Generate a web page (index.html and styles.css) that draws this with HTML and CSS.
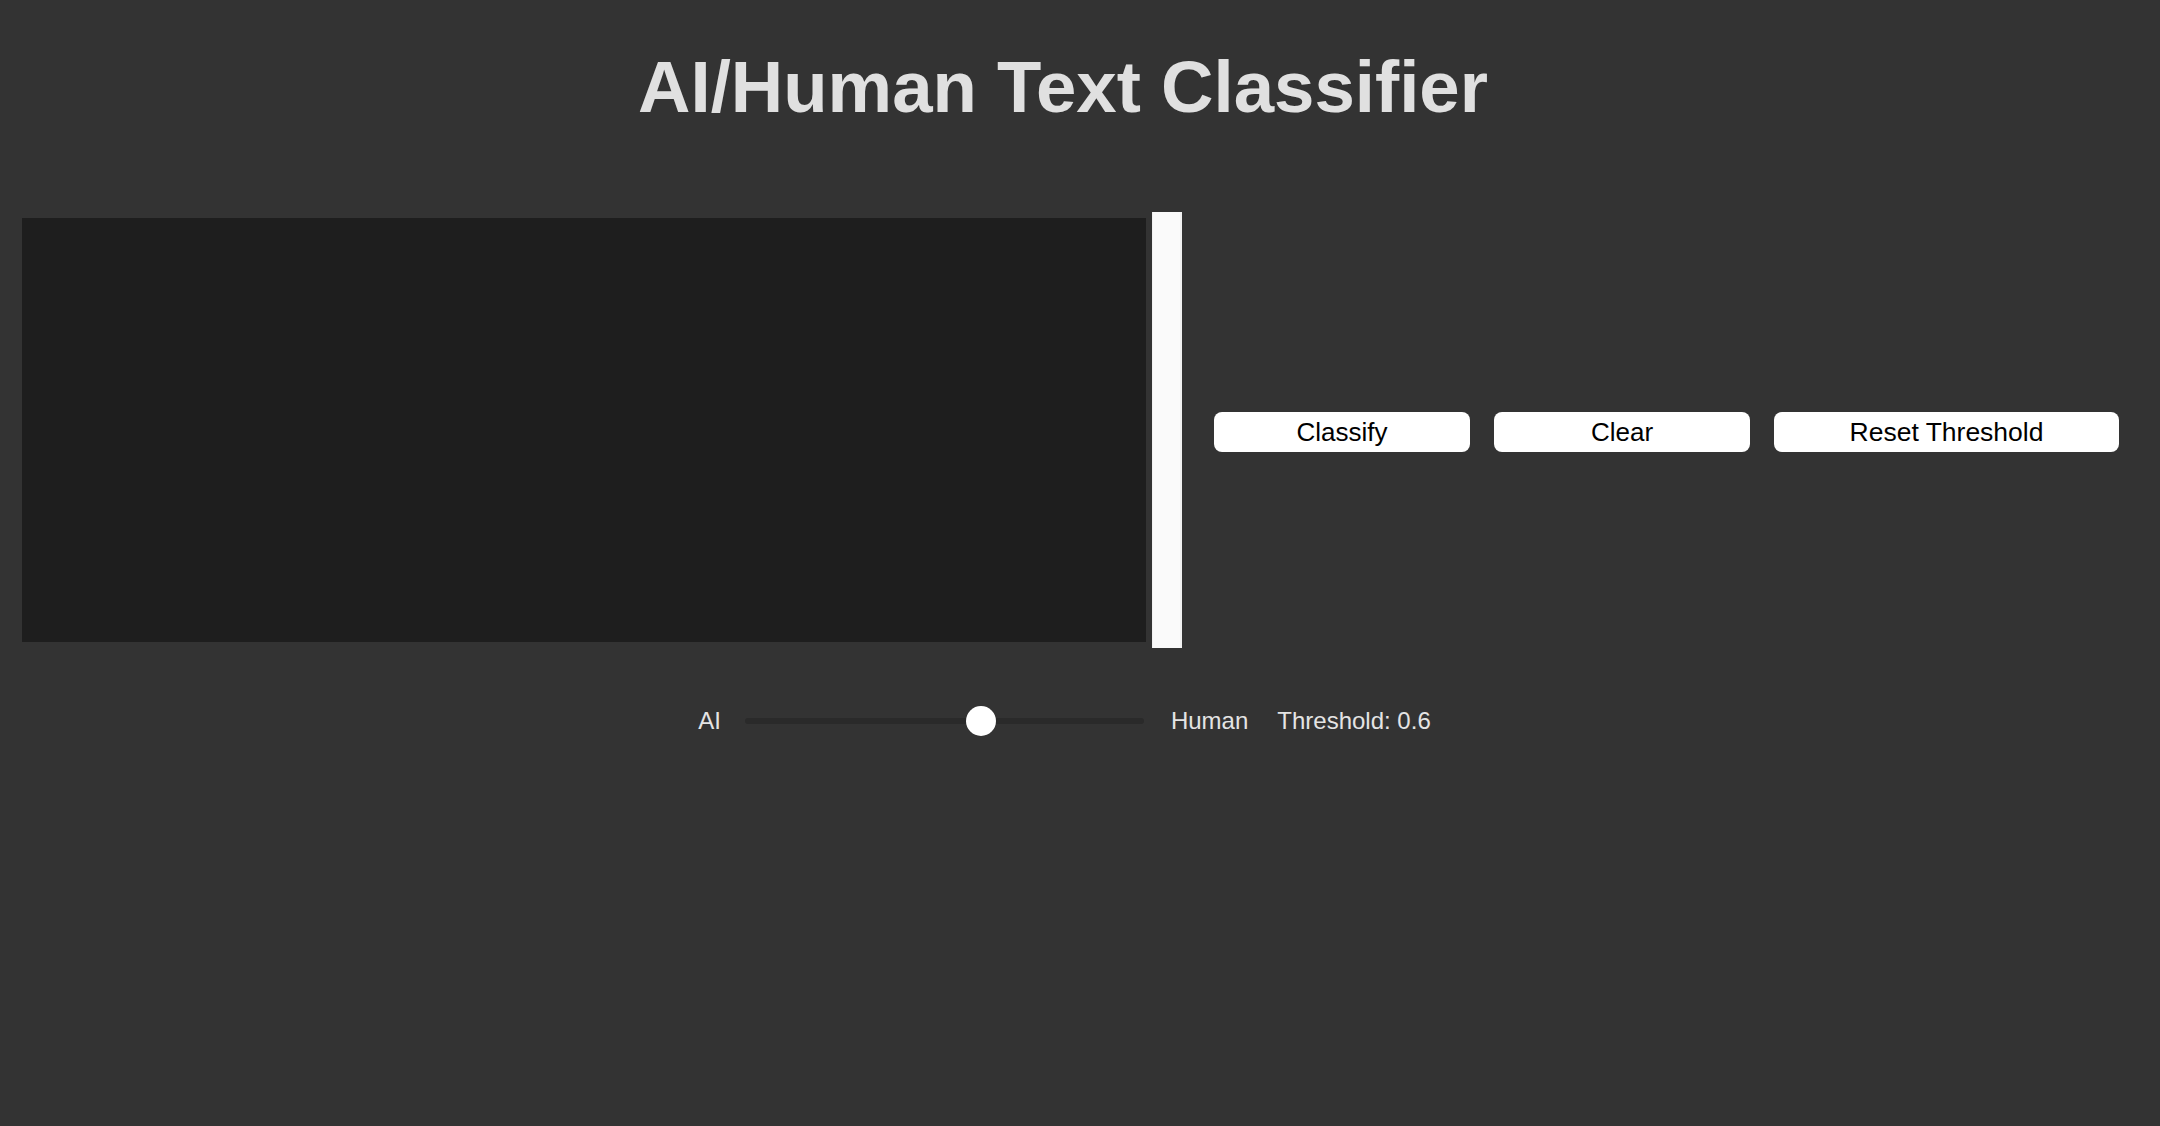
FILE: index.html
```html
<!DOCTYPE html>
<html lang="en">
<head>
<meta charset="utf-8">
<title>AI/Human Text Classifier</title>
<link rel="stylesheet" href="styles.css">
</head>
<body>
<div class="app">
  <h1 class="title">AI/Human Text Classifier</h1>
  <div class="main">
    <textarea class="editor"></textarea>
    <div class="side-bar"></div>
    <div class="buttons">
      <button class="btn btn-classify">Classify</button>
      <button class="btn btn-clear">Clear</button>
      <button class="btn btn-reset">Reset Threshold</button>
    </div>
  </div>
  <div class="slider-row">
    <span class="label label-ai">AI</span>
    <div class="slider">
      <div class="track"></div>
      <div class="thumb" style="left: 221px;"></div>
    </div>
    <span class="label label-human">Human</span>
    <span class="label label-threshold">Threshold: 0.6</span>
  </div>
</div>
</body>
</html>
```

FILE: styles.css
```css
html, body {
  margin: 0;
  padding: 0;
  background: #333333;
}

body {
  font-family: "Liberation Sans", Arial, sans-serif;
  color: #e0e0e0;
  height: 1126px;
  overflow: hidden;
}

.app {
  width: 2126px;
}

.title {
  margin: 51px 0 0;
  font-size: 72.6px;
  line-height: 72px;
  font-weight: bold;
  text-align: center;
  color: #e0e0e0;
}

.main {
  display: flex;
  align-items: center;
  margin-top: 89px;
  padding-left: 22px;
}

.editor {
  box-sizing: border-box;
  width: 1124px;
  height: 424px;
  margin: 0;
  padding: 0;
  border: none;
  outline: none;
  resize: none;
  background: #1e1e1e;
  color: #e0e0e0;
}

.side-bar {
  box-sizing: border-box;
  width: 30px;
  height: 436px;
  margin-left: 6px;
  background: #fafafa;
  border-left: 1px solid #f1f1f1;
  border-right: 2px solid #f1f1f1;
}

.buttons {
  display: flex;
  gap: 24px;
  margin-left: 32px;
  margin-top: 4px;
}

.btn {
  height: 40px;
  border: none;
  border-radius: 8px;
  background: #ffffff;
  color: #000000;
  font-family: "Liberation Sans", Arial, sans-serif;
  font-size: 26px;
  padding: 0;
}

.btn-classify, .btn-clear {
  width: 256px;
}

.btn-reset {
  width: 345px;
  font-size: 26.5px;
}

.slider-row {
  display: flex;
  justify-content: center;
  align-items: center;
  height: 30px;
  margin-top: 58px;
  padding-left: 3px;
}

.label {
  font-size: 24px;
  line-height: 26px;
  color: #e4e4e4;
}

.slider {
  position: relative;
  width: 399px;
  height: 30px;
  margin: 0 27px 0 24px;
  display: flex;
  align-items: center;
}

.track {
  width: 100%;
  height: 6px;
  border-radius: 3px;
  background: #2a2a2a;
}

.thumb {
  position: absolute;
  top: 0;
  width: 30px;
  height: 30px;
  border-radius: 50%;
  background: #ffffff;
}

.label-threshold {
  margin-left: 29px;
}
```
